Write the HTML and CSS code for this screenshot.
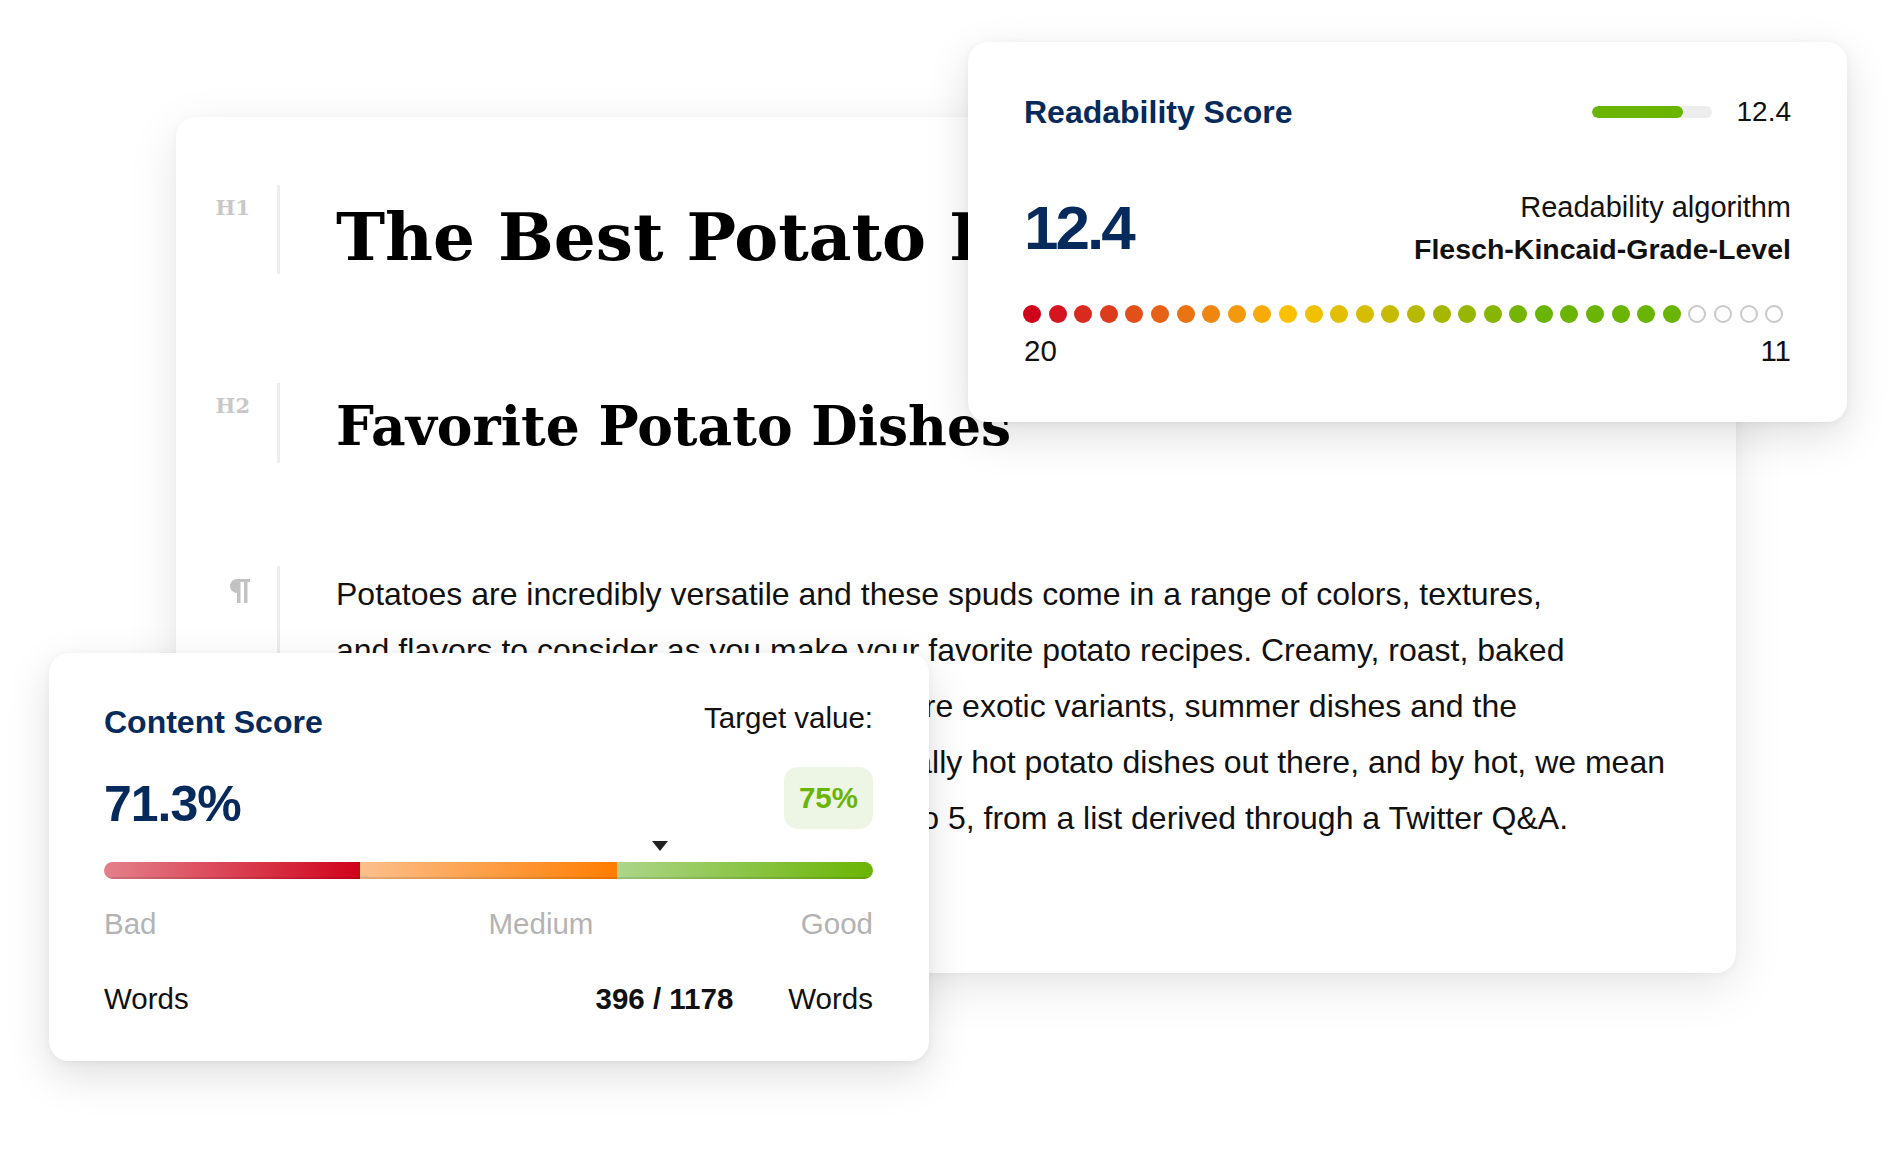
FILE: index.html
```html
<!DOCTYPE html>
<html lang="en">
<head>
    <meta charset="UTF-8">
    <meta name="viewport" content="width=device-width, initial-scale=1.0">
    <title>Content Editor - Scores</title>
    <link rel="stylesheet" href="styles.css">
</head>
<body>
    <div class="stage">
        <div class="editor">
            <div class="block block-h1">
                <span class="tag">H1</span>
                <div class="block-body">
                    <h1>The Best Potato Dishes</h1>
                </div>
            </div>

            <div class="block block-h2">
                <span class="tag">H2</span>
                <div class="block-body">
                    <h2>Favorite Potato Dishes</h2>
                </div>
            </div>

            <div class="block block-p">
                <span class="tag tag-p">
                    <svg width="23" height="24" viewBox="0 0 23 24"><path d="M10 0H23V3H20.5V24H17V3H13.5V24H10V14A7 7 0 0 1 10 0Z"/></svg>
                </span>
                <div class="block-body">
                    <p>Potatoes are incredibly versatile and these spuds come in a range of colors, textures,<br>
                    and flavors to consider as you make your favorite potato recipes. Creamy, roast, baked<br>
                    or mashed potatoes, as well as all the more exotic variants, summer dishes and the<br>
                    indulgent favorites. We've covered the really hot potato dishes out there, and by hot, we mean<br>
                    the most popular ones, ranked from one to 5, from a list derived through a Twitter Q&amp;A.</p>
                </div>
            </div>
        </div>

        <div class="card readability">
            <div class="card-head">
                <h3 class="card-title">Readability Score</h3>
                <div class="level">
                    <div class="level-bar"><div class="level-fill" style="width: 76%"></div></div>
                    <span>12.4</span>
                </div>
            </div>

            <div class="grade-row">
                <span class="grade-value">12.4</span>
                <div class="algorithm">
                    <span>Readability algorithm</span>
                    <strong>Flesch-Kincaid-Grade-Level</strong>
                </div>
            </div>

            <div class="dots">
                <span class="dot"></span><span class="dot"></span><span class="dot"></span><span class="dot"></span><span class="dot"></span>
                <span class="dot"></span><span class="dot"></span><span class="dot"></span><span class="dot"></span><span class="dot"></span>
                <span class="dot"></span><span class="dot"></span><span class="dot"></span><span class="dot"></span><span class="dot"></span>
                <span class="dot"></span><span class="dot"></span><span class="dot"></span><span class="dot"></span><span class="dot"></span>
                <span class="dot"></span><span class="dot"></span><span class="dot"></span><span class="dot"></span><span class="dot"></span>
                <span class="dot"></span>
                <span class="dot empty"></span><span class="dot empty"></span><span class="dot empty"></span><span class="dot empty"></span>
            </div>

            <div class="scale-labels">
                <span>20</span>
                <span>11</span>
            </div>
        </div>

        <div class="card score-card">
            <div class="card-head score-head">
                <h3 class="card-title">Content Score</h3>
                <span class="target-label">Target value:</span>
            </div>

            <div class="score-row">
                <span class="score-value">71.3%</span>
                <span class="target-pill">75%</span>
            </div>

            <div class="marker-track">
                <span class="marker" style="left: 71.3%"></span>
            </div>

            <div class="range-bar">
                <span class="seg seg-bad"></span>
                <span class="seg seg-medium"></span>
                <span class="seg seg-good"></span>
            </div>

            <div class="range-labels">
                <span>Bad</span>
                <div class="range-labels-right">
                    <span>Medium</span>
                    <span>Good</span>
                </div>
            </div>

            <div class="words-row">
                <span>Words</span>
                <div class="words-count">
                    <strong>396 / 1178</strong>
                    <span>Words</span>
                </div>
            </div>
        </div>
    </div>
</body>
</html>
```

FILE: styles.css
```css
body {
    margin: 0;
    background: #fff;
    font-family: "Liberation Sans", Arial, Helvetica, sans-serif;
    color: #111;
}
.stage {
    position: relative;
    width: 1902px;
    height: 1150px;
    overflow: hidden;
    padding: 117px 0 0 176px;
    box-sizing: border-box;
}

/* editor sheet */
.editor {
    width: 1560px;
    height: 856px;
    box-sizing: border-box;
    padding-top: 68px;
    background: #fff;
    border-radius: 20px;
    box-shadow: 0 14px 50px rgba(0, 0, 0, 0.10), 0 2px 8px rgba(0, 0, 0, 0.04);
}
.block {
    display: flex;
}
.block-h1 {
    margin-bottom: 109px;
}
.block-h2 {
    margin-bottom: 103px;
}
.tag {
    flex: none;
    width: 74px;
    padding-top: 12px;
    text-align: right;
    font-family: "DejaVu Serif", serif;
    font-weight: bold;
    font-size: 21px;
    line-height: 1;
    color: #c8c8c8;
}
.tag-p {
    padding-top: 13px;
}
.tag-p svg {
    display: block;
    margin-left: auto;
    fill: #c2c2c2;
}
.block-body {
    margin-left: 27px;
    padding-left: 56px;
    border-left: 3px solid #ededed;
}
h1, h2 {
    margin: 0;
    font-family: "DejaVu Serif", serif;
    font-weight: bold;
    line-height: 1;
    white-space: nowrap;
    color: #000;
}
h1 {
    font-size: 66px;
    padding: 19px 0 4px;
}
h2 {
    font-size: 53.5px;
    padding: 17px 0 9.5px;
}
.block-p p {
    margin: 0;
    font-size: 32px;
    line-height: 56px;
    white-space: nowrap;
    color: #111;
}

/* floating score cards */
.card {
    position: absolute;
    box-sizing: border-box;
    background: #fff;
    border-radius: 20px;
    box-shadow: 0 14px 44px rgba(0, 0, 0, 0.13), 0 2px 8px rgba(0, 0, 0, 0.05);
}
.card-head {
    display: flex;
    justify-content: space-between;
    align-items: center;
}
.card-title {
    margin: 0;
    font-size: 32px;
    line-height: 1;
    font-weight: bold;
    color: #062a5b;
}

.readability {
    left: 968px;
    top: 42px;
    width: 879px;
    padding: 54px 56px 56.5px;
}
.level {
    display: flex;
    align-items: center;
    gap: 25px;
    font-size: 28px;
    line-height: 1;
}
.level-bar {
    width: 120px;
    height: 12px;
    border-radius: 6px;
    background: #ededed;
    overflow: hidden;
}
.level-fill {
    height: 100%;
    border-radius: 6px;
    background: #6ab404;
}
.grade-row {
    display: flex;
    justify-content: space-between;
    align-items: center;
    margin-top: 58px;
}
.grade-value {
    font-size: 62px;
    font-weight: bold;
    line-height: 1;
    letter-spacing: -3px;
    color: #062a5b;
}
.algorithm {
    text-align: right;
    font-size: 29px;
    line-height: 42px;
}
.algorithm span,
.algorithm strong {
    display: block;
}
.algorithm strong {
    font-size: 28.5px;
}
.dots {
    display: flex;
    gap: 7.6px;
    margin-top: 35px;
    margin-left: -1px;
}
.dot {
    width: 18px;
    height: 18px;
    border-radius: 50%;
    box-sizing: border-box;
    background: #6ab404;
}
.dot:nth-child(1) { background: #d0021b; }
.dot:nth-child(2) { background: #d41520; }
.dot:nth-child(3) { background: #d92a1f; }
.dot:nth-child(4) { background: #dd3b1e; }
.dot:nth-child(5) { background: #e14f1a; }
.dot:nth-child(6) { background: #e66217; }
.dot:nth-child(7) { background: #ea7413; }
.dot:nth-child(8) { background: #ee8610; }
.dot:nth-child(9) { background: #f3990c; }
.dot:nth-child(10) { background: #f8ab08; }
.dot:nth-child(11) { background: #fdc000; }
.dot:nth-child(12) { background: #efc100; }
.dot:nth-child(13) { background: #e2bf00; }
.dot:nth-child(14) { background: #d5bd00; }
.dot:nth-child(15) { background: #c6bb00; }
.dot:nth-child(16) { background: #b6b900; }
.dot:nth-child(17) { background: #a6b700; }
.dot:nth-child(18) { background: #96b601; }
.dot:nth-child(19) { background: #86b502; }
.dot:nth-child(20) { background: #76b403; }
.dot.empty {
    background: #fff;
    border: 2.5px solid #c9c9c9;
}
.scale-labels {
    display: flex;
    justify-content: space-between;
    margin-top: 13px;
    font-size: 29.5px;
    line-height: 1;
}

.score-card {
    left: 49px;
    top: 653px;
    width: 880px;
    padding: 53px 56px 47px 55px;
}
.score-head {
    align-items: flex-start;
}
.target-label {
    margin-top: -3px;
    font-size: 29.5px;
    line-height: 1;
}
.score-row {
    display: flex;
    justify-content: space-between;
    align-items: flex-end;
    margin-top: 29px;
}
.score-value {
    font-size: 50px;
    font-weight: bold;
    line-height: 1;
    letter-spacing: -1px;
    color: #062a5b;
}
.target-pill {
    padding: 16px 15px;
    border-radius: 14px;
    background: #edf6e4;
    color: #6ab404;
    font-size: 29.5px;
    font-weight: bold;
    line-height: 1;
}
.marker-track {
    position: relative;
    height: 10px;
    margin-top: 12px;
}
.marker {
    position: absolute;
    top: 0;
    width: 0;
    height: 0;
    border-left: 8.5px solid transparent;
    border-right: 8.5px solid transparent;
    border-top: 10px solid #222;
}
.range-bar {
    display: flex;
    height: 17px;
    margin-top: 11px;
    border-radius: 9px;
    overflow: hidden;
}
.seg {
    flex: 1;
    box-shadow: inset 0 -2px 0 rgba(0, 0, 0, 0.10);
}
.seg-bad {
    background: linear-gradient(90deg, #e3818b, #d0021b);
}
.seg-medium {
    background: linear-gradient(90deg, #fbbf8d, #ff7d00);
}
.seg-good {
    background: linear-gradient(90deg, #acd58a, #6ab404);
}
.range-labels {
    display: grid;
    grid-template-columns: 1fr 1fr;
    margin-top: 30px;
    font-size: 29.5px;
    line-height: 1;
    color: #b3b3b3;
}
.range-labels-right {
    display: flex;
    justify-content: space-between;
}
.words-row {
    display: flex;
    justify-content: space-between;
    margin-top: 46px;
    font-size: 29.5px;
    line-height: 1;
}
.words-count {
    display: flex;
    gap: 55px;
}
```
